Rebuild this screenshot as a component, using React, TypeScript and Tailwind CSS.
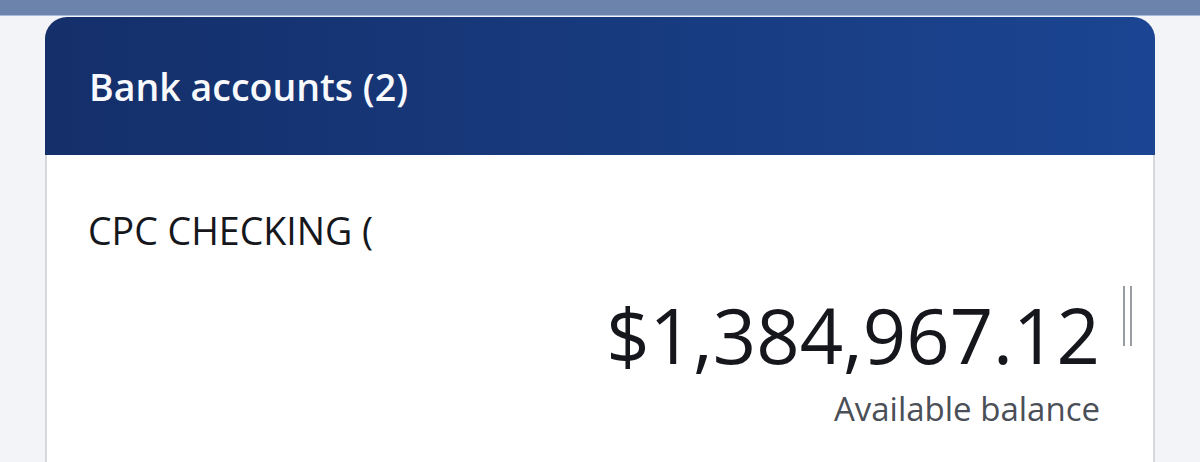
export default function App() {
  return (
    <div className="h-[462px] w-[1200px] overflow-hidden bg-[#f3f4f8] font-['Open_Sans',sans-serif]">
      <div className="h-4 border-b border-[#a9bcdc] bg-[#6c84ab]" />
      <div className="mx-[45px] mt-[1px] h-[445px] rounded-t-[22px] border-x-2 border-[#d6d7db] bg-white">
        <div className="-mx-[2px] flex h-[138px] items-center rounded-t-[22px] bg-gradient-to-r from-[#142f6a] to-[#1b4592] px-[44px]">
          <h2 className="pt-[2px] text-[37.5px] font-semibold text-[#f8f9fc]">Bank accounts (2)</h2>
        </div>
        <div className="pl-[41px] pr-[21px] pt-[57px]">
          <p className="text-[37.5px] leading-none text-[#15171c]">CPC CHECKING (</p>
          <div className="mt-[47px] flex justify-end">
            <div className="flex flex-col items-end">
              <p className="text-[76px] leading-none text-[#15171c]">$1,384,967.12</p>
              <p className="mt-[19px] text-[33px] leading-none text-[#4b4f57]">Available balance</p>
            </div>
            <div className="ml-[23px] mt-[-11px] flex h-[60px] gap-[5px]">
              <span className="w-[2px] bg-[#9a9ca3]" />
              <span className="w-[2px] bg-[#9a9ca3]" />
            </div>
          </div>
        </div>
      </div>
    </div>
  );
}
